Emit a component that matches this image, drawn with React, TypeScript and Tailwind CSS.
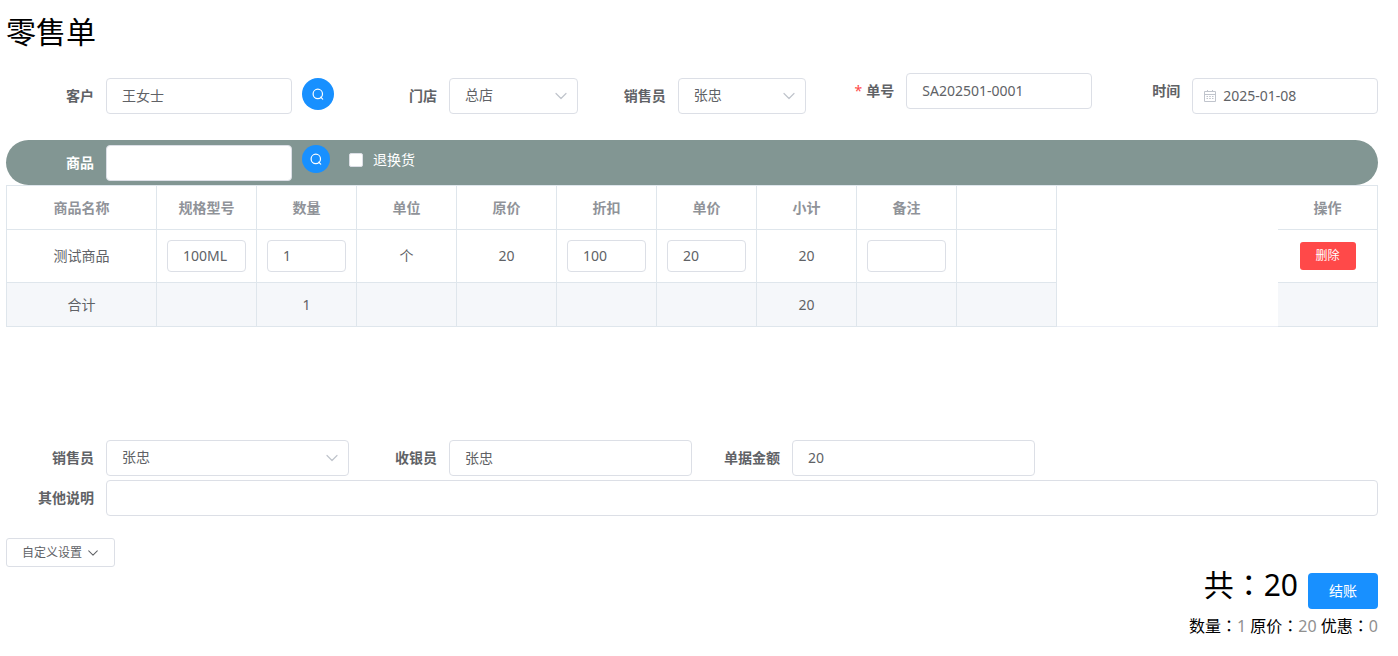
import { useState } from "react";
import type { ReactNode } from "react";

const control =
  "block h-9 w-full rounded border border-[#dcdfe6] bg-white px-[15px] pb-0.5 text-sm text-[#606266] outline-none focus:border-[#1890ff]";
const smallControl =
  "block h-8 w-full rounded border border-[#dcdfe6] bg-white px-[15px] pb-0.5 text-sm text-[#606266] outline-none focus:border-[#1890ff]";
const cell = "border-b border-r border-[#dfe6ec] px-2.5 text-center";

function SearchIcon() {
  return (
    <svg viewBox="0 0 14 14" className="size-3.5" fill="none" stroke="currentColor" strokeWidth="1.2" strokeLinecap="round">
      <circle cx="6.8" cy="6.9" r="4.7" />
      <path d="M9.7 10.2 L11.7 12.2" />
    </svg>
  );
}

function ChevronIcon({ className }: { className: string }) {
  return (
    <svg viewBox="0 0 14 14" className={className} fill="none" stroke="currentColor" strokeWidth="1.2" strokeLinecap="round" strokeLinejoin="round">
      <path d="M2 4.5 L7 9.5 L12 4.5" />
    </svg>
  );
}

function CalendarIcon({ className }: { className: string }) {
  return (
    <svg viewBox="0 0 14 14" className={className} fill="none" stroke="currentColor" strokeWidth="1">
      <path d="M1.5 2.5 H12.5 V12.5 H1.5 Z M1.5 5.5 H12.5 M4.5 1 V3 M9.5 1 V3" />
      <path d="M3.5 7.5 H5 M6.2 7.5 H7.8 M9 7.5 H10.5 M3.5 9.5 H5 M6.2 9.5 H7.8 M9 9.5 H10.5" />
    </svg>
  );
}

type FieldProps = {
  id: string;
  label: string;
  required?: boolean;
  light?: boolean;
  raised?: boolean;
  children: ReactNode;
};

function Field({ id, label, required, light, raised, children }: FieldProps) {
  return (
    <div className="flex min-w-0 items-start">
      <label
        htmlFor={id}
        className={`w-[100px] shrink-0 pr-3 text-right text-sm font-bold ${raised ? "-mt-[5px] leading-9" : "leading-9"} ${light ? "text-white" : "text-[#606266]"}`}
      >
        {required && <span className="mr-1 font-normal text-[#ff4949]">*</span>}
        {label}
      </label>
      <div className="min-w-0 flex-1">{children}</div>
    </div>
  );
}

function SelectBox({ id, options }: { id: string; options: string[] }) {
  return (
    <div className="relative">
      <select id={id} className={`${control} appearance-none`}>
        {options.map((o) => (
          <option key={o}>{o}</option>
        ))}
      </select>
      <ChevronIcon className="pointer-events-none absolute right-2.5 top-[11px] size-3.5 text-[#c0c4cc]" />
    </div>
  );
}

const headings = ["商品名称", "规格型号", "数量", "单位", "原价", "折扣", "单价", "小计", "备注", ""];
const totals = ["合计", "", "1", "", "", "", "", "20", "", ""];

function Colon() {
  return <span className="font-['Noto_Sans_CJK_TC',sans-serif]">：</span>;
}

export default function App() {
  const [returning, setReturning] = useState(false);
  return (
    <main className="pl-1.5 pr-5 pt-2.5 pb-5 font-['Noto_Sans','Noto_Sans_CJK_SC',sans-serif] text-sm text-[#606266]">
      <h1 className="h-11 text-[30px] font-normal leading-11 text-black">零售单</h1>

      <form onSubmit={(e) => e.preventDefault()}>
        <div className="mt-6 grid grid-cols-24 items-start">
          <div className="col-span-6 grid grid-cols-6">
            <div className="col-span-5">
              <Field id="customer" label="客户">
                <input id="customer" className={control} defaultValue="王女士" />
              </Field>
            </div>
            <button type="button" aria-label="查询客户" className="ml-2.5 flex size-8 items-center justify-center rounded-full bg-[#1890ff] text-white">
              <SearchIcon />
            </button>
          </div>
          <div className="col-span-4">
            <Field id="store" label="门店">
              <SelectBox id="store" options={["总店"]} />
            </Field>
          </div>
          <div className="col-span-4">
            <Field id="seller" label="销售员">
              <SelectBox id="seller" options={["张忠"]} />
            </Field>
          </div>
          <div className="col-span-5 -mt-[5px]">
            <Field id="number" label="单号" required>
              <input id="number" className={control} defaultValue="SA202501-0001" />
            </Field>
          </div>
          <div className="col-span-5">
            <Field id="date" label="时间" raised>
              <div className="relative">
                <CalendarIcon className="pointer-events-none absolute left-[11px] top-[11px] size-3.5 text-[#c0c4cc]" />
                <input
                  id="date"
                  className="block h-9 w-full rounded border border-[#dcdfe6] bg-white pb-0.5 pl-[30px] pr-[15px] text-sm text-[#606266] outline-none focus:border-[#1890ff]"
                  defaultValue="2025-01-08"
                />
              </div>
            </Field>
          </div>
        </div>

        <div className="mt-[26px] grid h-[45px] grid-cols-24 items-start rounded-full bg-[#829693] pt-[5px]">
          <div className="col-span-6 grid grid-cols-6">
            <div className="col-span-5">
              <Field id="product" label="商品" light>
                <input id="product" className={control} />
              </Field>
            </div>
            <button type="button" aria-label="查询商品" className="ml-2.5 flex size-7 items-center justify-center rounded-full bg-[#1890ff] text-white">
              <SearchIcon />
            </button>
          </div>
          <label className="col-span-6 flex h-[30px] items-center gap-2.5 text-sm text-white">
            <input
              type="checkbox"
              checked={returning}
              onChange={(e) => setReturning(e.target.checked)}
              className="size-3.5 appearance-none rounded-xs border border-[#dcdfe6] bg-white checked:bg-[#1890ff]"
            />
            退换货
          </label>
        </div>
      </form>

      <table className="w-full table-fixed border-separate border-spacing-0 border-l border-t border-[#dfe6ec]">
        <colgroup>
          <col className="w-[150px]" />
          {headings.slice(1).map((_, i) => (
            <col key={i} className="w-[100px]" />
          ))}
          <col />
          <col className="w-[100px]" />
        </colgroup>
        <thead>
          <tr className="h-11 text-[#909399]">
            {headings.map((h, i) => (
              <th key={i} className={`${cell} font-bold`}>{h}</th>
            ))}
            <td />
            <th className={`${cell} font-bold`}>操作</th>
          </tr>
        </thead>
        <tbody>
          <tr className="h-[53px]">
            <td className={cell}>测试商品</td>
            <td className={cell}><input aria-label="规格型号" className={smallControl} defaultValue="100ML" /></td>
            <td className={cell}><input aria-label="数量" className={smallControl} defaultValue="1" /></td>
            <td className={cell}>个</td>
            <td className={cell}>20</td>
            <td className={cell}><input aria-label="折扣" className={smallControl} defaultValue="100" /></td>
            <td className={cell}><input aria-label="单价" className={smallControl} defaultValue="20" /></td>
            <td className={cell}>20</td>
            <td className={cell}><input aria-label="备注" className={smallControl} /></td>
            <td className={cell} />
            <td />
            <td className={cell}>
              <button type="button" className="h-7 w-14 rounded-[3px] bg-[#ff4949] align-middle text-xs text-white">删除</button>
            </td>
          </tr>
        </tbody>
        <tfoot>
          <tr className="h-11">
            {totals.map((t, i) => (
              <td key={i} className={`${cell} bg-[#f5f7fa]`}>{t}</td>
            ))}
            <td className="border-b border-[#ebeef5]" />
            <td className={`${cell} bg-[#f5f7fa]`} />
          </tr>
        </tfoot>
      </table>

      <form className="mt-[113px] flex flex-col gap-1" onSubmit={(e) => e.preventDefault()}>
        <div className="grid grid-cols-4">
          <Field id="seller2" label="销售员">
            <SelectBox id="seller2" options={["张忠"]} />
          </Field>
          <Field id="cashier" label="收银员">
            <input id="cashier" className={control} defaultValue="张忠" />
          </Field>
          <Field id="amount" label="单据金额">
            <input id="amount" className={control} defaultValue="20" />
          </Field>
        </div>
        <Field id="note" label="其他说明">
          <input id="note" className={control} />
        </Field>
      </form>

      <button type="button" className="mt-[22px] flex h-[29px] items-center gap-[5px] rounded-[3px] border border-[#dcdfe6] bg-white px-[15px] text-xs text-[#606266]">
        自定义设置
        <ChevronIcon className="size-3" />
      </button>

      <div className="mt-1.5 flex items-start justify-end gap-2.5 text-black">
        <p className="text-[30px] font-normal leading-5">共<Colon />20</p>
        <button type="button" className="h-9 w-[70px] rounded bg-[#1890ff] text-sm text-white">结账</button>
      </div>
      <p className="mt-1 text-right text-base leading-6 text-black">
        数量<Colon /><span className="text-[#909090]">1</span> 原价<Colon />
        <span className="text-[#909090]">20</span> 优惠<Colon /><span className="text-[#909090]">0</span>
      </p>
    </main>
  );
}
